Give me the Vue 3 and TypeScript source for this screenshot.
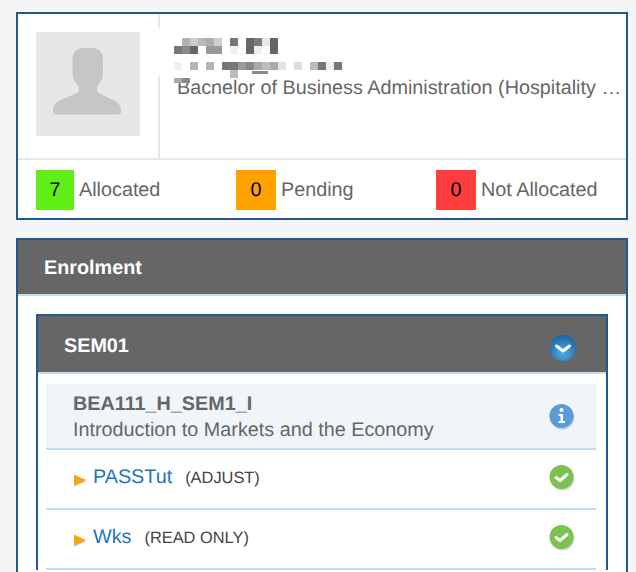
<script setup lang="ts">
const cells: [number, number, string][] = [
  [182, 38, '#b4b4b4'], [190, 38, '#cccccc'], [198, 38, '#b8b8b8'], [206, 38, '#adadad'], [214, 38, '#cfcfcf'],
  [230, 38, '#777777'], [246, 38, '#686868'], [254, 38, '#7c7c7c'], [262, 38, '#e8e8e8'], [270, 38, '#666666'],
  [174, 46, '#777777'], [182, 46, '#8a8a8a'], [190, 46, '#666666'], [206, 46, '#999999'], [214, 46, '#999999'],
  [230, 46, '#f2f2f2'], [246, 46, '#666666'], [254, 46, '#eeeeee'], [270, 46, '#666666'],
  [174, 62, '#f2f2f2'], [190, 62, '#b5b5b5'], [206, 62, '#b5b5b5'], [222, 62, '#777777'], [230, 62, '#777777'],
  [238, 62, '#999999'], [246, 62, '#888888'], [254, 62, '#aaaaaa'], [262, 62, '#bbbbbb'], [270, 62, '#aaaaaa'],
  [278, 62, '#e4e4e4'], [294, 62, '#dddddd'], [310, 62, '#bbbbbb'], [318, 62, '#777777'], [326, 62, '#eeeeee'], [334, 62, '#777777'],
  [230, 70, '#bbbbbb']
]
const stats = [
  { value: 7, label: 'Allocated', tone: 'green' },
  { value: 0, label: 'Pending', tone: 'orange' },
  { value: 0, label: 'Not Allocated', tone: 'red' }
]
const rows = [
  { name: 'PASSTut', mode: '(ADJUST)' },
  { name: 'Wks', mode: '(READ ONLY)' }
]
</script>

<template>
  <div class="page">
    <section class="card profile">
      <div class="top">
        <div class="photo-cell">
          <div class="photo">
            <svg viewBox="0 0 104 104" width="104" height="104">
              <path d="M36.500 27C36.500 20 41 16 48 16h8c7 0 11 4 11 11v13c0 7-3 11-6 14.500v4c0 2.500 6 5 13 8 8.500 3 11 7 11 13 0 2-1 3-3 3H20c-2 0-3-1-3-3 0-6 2.500-10 11-13 7-3 15-5.500 15-8v-4c-3.500-3.500-6.500-7.500-6.500-14.500z" fill="#c6c6c6" />
            </svg>
          </div>
        </div>
        <div class="details">
          <p class="degree">Bachelor of Business Administration (Hospitality Management)</p>
        </div>
        <svg class="mosaic" viewBox="158 28 192 60" width="192" height="60">
          <rect x="158" y="28" width="192" height="48" fill="#fff" />
          <rect x="210" y="76" width="5" height="8" fill="#fff" />
          <rect v-for="(c, i) in cells" :key="i" :x="c[0]" :y="c[1]" width="8" height="8" :fill="c[2]" />
          <rect x="174" y="78" width="8" height="5" fill="#a8a8a8" />
          <rect x="182" y="78" width="8" height="5" fill="#888888" />
          <rect x="252" y="71" width="16" height="3" fill="#8a8a8a" />
        </svg>
      </div>
      <div class="stats">
        <div v-for="s in stats" :key="s.label" class="stat">
          <span class="count" :class="s.tone">{{ s.value }}</span>
          <span class="stat-label">{{ s.label }}</span>
        </div>
      </div>
    </section>

    <section class="card enrolment">
      <h2 class="bar outer-bar">Enrolment</h2>
      <div class="enrolment-body">
        <div class="card sem">
          <div class="bar sem-bar">
            <span class="sem-title">SEM01</span>
            <svg class="ball" viewBox="0 0 28 28" width="28" height="28">
              <defs>
                <radialGradient id="blueBall" cx="50%" cy="70%" r="70%">
                  <stop offset="0" stop-color="#52abe2" />
                  <stop offset="1" stop-color="#17649f" />
                </radialGradient>
              </defs>
              <circle cx="14" cy="14" r="13" fill="url(#blueBall)" />
              <path d="M7.500 12l6.500 5 6.500-5" fill="none" stroke="#fff" stroke-width="3" stroke-linecap="round" stroke-linejoin="round" />
            </svg>
          </div>
          <div class="unit">
            <div class="unit-text">
              <strong>BEA111_H_SEM1_I</strong>
              <span>Introduction to Markets and the Economy</span>
            </div>
            <svg class="ball" viewBox="0 0 28 28" width="28" height="28">
              <circle cx="14.500" cy="15.500" r="12" fill="#aab6c2" opacity=".6" />
              <circle cx="13.500" cy="14" r="12" fill="#5b9bd5" />
              <circle cx="13.500" cy="8" r="2" fill="#fff" />
              <path d="M10.500 12h4.500v7h2v2H10.500v-2h2v-5h-2z" fill="#fff" />
            </svg>
          </div>
          <div v-for="r in rows" :key="r.name" class="row">
            <svg class="arrow" viewBox="0 0 12 13" width="12" height="13">
              <path d="M0 2.500l12 5-12 5z" fill="#c9c4ba" />
              <path d="M0 .5l12 5.500-12 5.500z" fill="#ffa20f" />
            </svg>
            <a class="name">{{ r.name }}</a>
            <span class="mode">{{ r.mode }}</span>
            <svg class="ball" viewBox="0 0 28 28" width="28" height="28">
              <circle cx="14.500" cy="15.500" r="12" fill="#b9bfb3" opacity=".6" />
              <circle cx="13.500" cy="14" r="12" fill="#7cc152" />
              <path d="M8 14.500l4 3 7-6" fill="none" stroke="#fff" stroke-width="3" stroke-linecap="round" stroke-linejoin="round" />
            </svg>
          </div>
        </div>
      </div>
    </section>
  </div>
</template>

<style scoped>
.page {
  box-sizing: border-box;
  height: 572px;
  overflow: hidden;
  padding: 12px 8px 0 16px;
  background: #f4f6f6;
  font-family: "Liberation Sans", Arial, sans-serif;
  font-size: 19.8px;
  text-rendering: geometricPrecision;
  color: #666;
}
.card {
  box-sizing: border-box;
  border: 2px solid #24578f;
  background: #fff;
}
.profile {
  height: 208px;
  margin-bottom: 18px;
}
.top {
  position: relative;
  display: flex;
  height: 146px;
  border-bottom: 2px solid #e8e8e8;
  box-sizing: border-box;
}
.photo-cell {
  box-sizing: border-box;
  width: 142px;
  padding: 18px;
  border-right: 2px solid #e8e8e8;
}
.photo {
  width: 104px;
  height: 104px;
  background: #e6e7e8;
}
.details {
  flex: 1;
  min-width: 0;
  padding: 61px 0 0 17px;
}
.degree {
  margin: 0;
  width: 445px;
  line-height: 26px;
  white-space: nowrap;
  overflow: hidden;
  text-overflow: ellipsis;
}
.mosaic {
  position: absolute;
  left: 140px;
  top: 14px;
}
.stats {
  display: flex;
  padding: 10px 18px;
}
.stat {
  display: flex;
  flex: 0 0 200px;
  align-items: center;
  gap: 5px;
}
.stat:last-child {
  flex: 0 0 auto;
}
.count {
  width: 40px;
  height: 40px;
  line-height: 40px;
  text-align: center;
  color: #000;
}
.count.green {
  width: 38px;
  background: #5fef17;
}
.count.orange {
  background: #ffa200;
}
.count.red {
  background: #ff3d3f;
}
.enrolment {
  height: 340px;
}
.bar {
  box-sizing: border-box;
  margin: 0;
  background: #666;
  color: #fff;
  font-size: 19.8px;
  font-weight: 700;
  border-bottom: 2px solid #c5dcef;
}
.outer-bar {
  height: 56px;
  padding: 0 26px;
  line-height: 56px;
}
.enrolment-body {
  padding: 18px 18px 0;
}
.sem {
  border-bottom: 0;
}
.sem-bar {
  display: flex;
  align-items: center;
  justify-content: space-between;
  height: 58px;
  padding: 0 29px 0 26px;
}
.sem-title {
  margin-top: 4px;
}
.sem-bar .ball {
  margin-top: 7px;
}
.unit {
  display: flex;
  align-items: center;
  justify-content: space-between;
  box-sizing: border-box;
  height: 66px;
  margin: 10px 10px 0 8px;
  padding: 0 20px 0 27px;
  background: #f0f5fa;
  border-bottom: 2px solid #c5dcef;
}
.unit-text {
  display: flex;
  flex-direction: column;
  margin-top: 2px;
  line-height: 26px;
}
.row {
  display: flex;
  align-items: center;
  box-sizing: border-box;
  height: 60px;
  margin: 0 10px 0 8px;
  padding: 0 20px 6px 28px;
  border-bottom: 2px solid #c5dcef;
}
.arrow {
  margin: 9px 7px 0 0;
}
.name {
  margin-top: 3px;
  color: #1c75bc;
}
.mode {
  margin: 5px 0 0 13px;
  color: #444;
  font-size: 16.4px;
}
.ball {
  filter: blur(0.4px);
}
.row .ball {
  margin: 2px 0 0 auto;
}
</style>
